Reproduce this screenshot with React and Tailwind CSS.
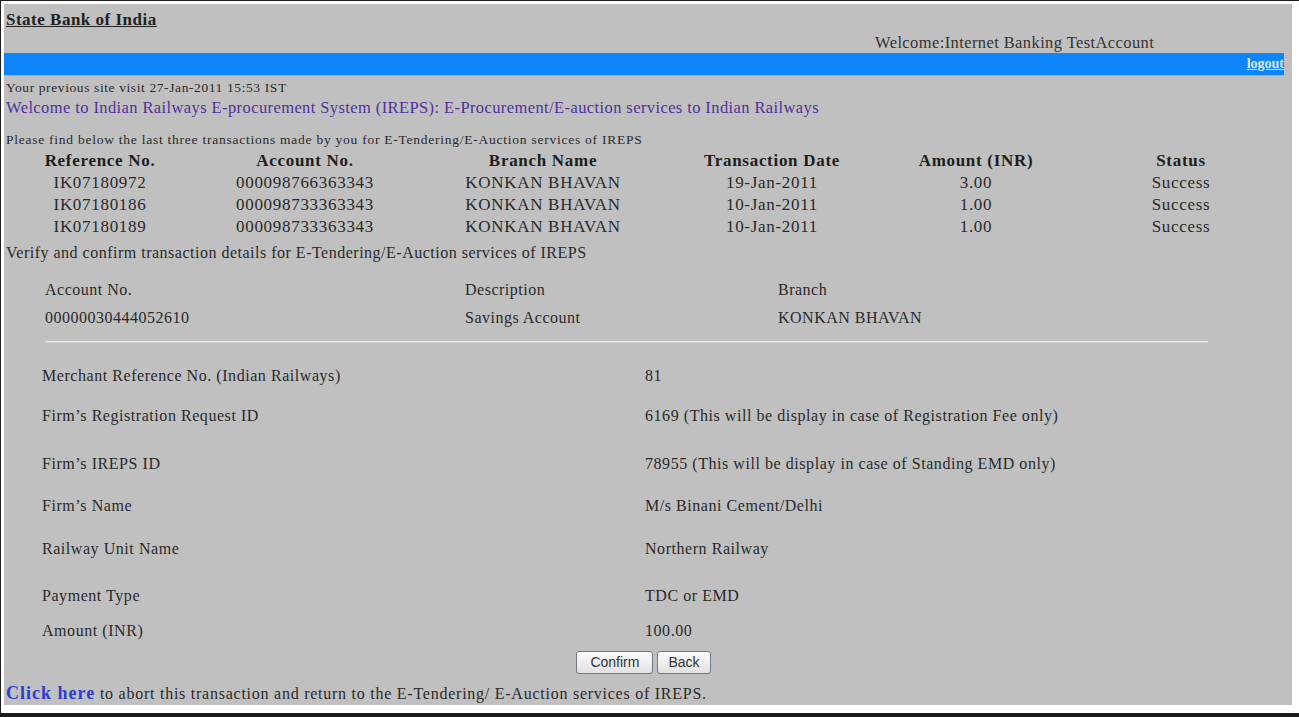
const transactions = [
  { ref: "IK07180972", acc: "000098766363343", branch: "KONKAN BHAVAN", date: "19-Jan-2011", amount: "3.00", status: "Success" },
  { ref: "IK07180186", acc: "000098733363343", branch: "KONKAN BHAVAN", date: "10-Jan-2011", amount: "1.00", status: "Success" },
  { ref: "IK07180189", acc: "000098733363343", branch: "KONKAN BHAVAN", date: "10-Jan-2011", amount: "1.00", status: "Success" },
];

const details = [
  { label: "Merchant Reference No. (Indian Railways)", value: "81", h: "h-[40px]" },
  { label: "Firm\u2019s Registration Request ID", value: "6169 (This will be display in case of Registration Fee only)", h: "h-[48px]" },
  { label: "Firm\u2019s IREPS ID", value: "78955 (This will be display in case of Standing EMD only)", h: "h-[42px]" },
  { label: "Firm\u2019s Name", value: "M/s Binani Cement/Delhi", h: "h-[43px]" },
  { label: "Railway Unit Name", value: "Northern Railway", h: "h-[47px]" },
  { label: "Payment Type", value: "TDC or EMD", h: "h-[35px]" },
  { label: "Amount (INR)", value: "100.00", h: "h-[20px]" },
];

const cols = ["w-[192px]", "w-[218px]", "w-[258px]", "w-[200px]", "w-[208px]", "w-[202px]"];

function App() {
  return (
    <div className="w-[1299px] h-[717px] bg-white border-t border-l border-b-[4px] border-[#1c1c1c] pt-[3px] pl-[3px] pr-[7px] pb-[8px] overflow-hidden">
      <div className="w-full h-full bg-[#c0c0c0] text-[#2a2a2a] font-['Liberation_Serif',serif] flex flex-col">
        {/* cabecera */}
        <div className="pl-[2px] mt-[6px] h-[20px] leading-[20px] text-[17px] tracking-[0.5px] font-bold underline text-[#222]">State Bank of India</div>
        <div className="pl-[871px] h-[23px] pt-[3px] leading-[20px] text-[16.5px] tracking-[0.4px] text-[#333]">Welcome:Internet Banking TestAccount</div>
        <div className="w-[1280px] h-[22px] bg-[#0f85fc] flex items-center justify-end">
          <a className="text-[14px] font-bold text-[#dfe8f2] underline leading-[22px]">logout</a>
        </div>
        <div className="w-[1280px] h-[1px] bg-[#7fb8ec]"></div>

        <div className="pl-[2px] mt-[4px] h-[16px] leading-[16px] text-[13.5px] tracking-[0.6px]">Your previous site visit 27-Jan-2011 15:53 IST</div>
        <div className="pl-[2px] mt-[2px] h-[20px] leading-[20px] text-[16.5px] tracking-[0.4px] text-[#50309c]">
          Welcome to Indian Railways E-procurement System (IREPS): E-Procurement/E-auction services to Indian Railways
        </div>

        {/* ultimas transacciones */}
        <div className="pl-[2px] mt-[14px] h-[16px] leading-[16px] text-[13.5px] tracking-[0.75px]">
          Please find below the last three transactions made by you for E-Tendering/E-Auction services of IREPS
        </div>
        <div className="flex mt-[2px] h-[22px] leading-[22px] text-[17px] tracking-[0.7px] font-bold text-[#1e1e1e]">
          {["Reference No.", "Account No.", "Branch Name", "Transaction Date", "Amount (INR)", "Status"].map((h, i) => (
            <div key={h} className={cols[i] + " text-center"}>{h}</div>
          ))}
        </div>
        {transactions.map((t) => (
          <div key={t.ref} className="flex h-[22px] leading-[22px] text-[17px] tracking-[0.7px]">
            {[t.ref, t.acc, t.branch, t.date, t.amount, t.status].map((v, i) => (
              <div key={i} className={cols[i] + " text-center"}>{v}</div>
            ))}
          </div>
        ))}

        <div className="pl-[2px] mt-[5px] h-[20px] leading-[20px] text-[16px] tracking-[0.5px]">
          Verify and confirm transaction details for E-Tendering/E-Auction services of IREPS
        </div>

        {/* cuenta */}
        <div className="grid grid-cols-[420px_313px_1fr] pl-[41px] mt-[13px] text-[16px] tracking-[0.5px] leading-[28px]">
          <div>Account No.</div>
          <div>Description</div>
          <div>Branch</div>
          <div>00000030444052610</div>
          <div>Savings Account</div>
          <div>KONKAN BHAVAN</div>
        </div>
        <div className="ml-[41px] w-[1163px] mt-[9px] h-[2px] border-t border-[#e6e6e6] border-b border-b-[#cfcfcf]"></div>

        {/* detalles */}
        <div className="mt-[23px] flex flex-col text-[16px] tracking-[0.55px] leading-[20px]">
          {details.map((d) => (
            <div key={d.label} className={d.h + " flex items-start"}>
              <div className="w-[641px] pl-[38px]">{d.label}</div>
              <div>{d.value}</div>
            </div>
          ))}
        </div>

        <div className="flex justify-center gap-[4px] mt-[10px] pr-[9px] font-['Liberation_Sans',sans-serif] text-[14px]">
          <button className="h-[23px] px-[13px] border border-[#6f7a84] rounded-[3px] bg-gradient-to-b from-[#fbfbfb] to-[#e2e2e2] text-[#333]">Confirm</button>
          <button className="h-[23px] px-[10px] border border-[#6f7a84] rounded-[3px] bg-gradient-to-b from-[#fbfbfb] to-[#e2e2e2] text-[#333]">Back</button>
        </div>

        <div className="pl-[2px] mt-[8px] h-[22px] text-[16px] tracking-[0.75px] leading-[22px]">
          <a className="text-[18px] tracking-[1px] font-bold text-[#2b3ed2]">Click here</a> to abort this transaction and return to the E-Tendering/ E-Auction services of IREPS.
        </div>
      </div>
    </div>
  );
}

export default App;
